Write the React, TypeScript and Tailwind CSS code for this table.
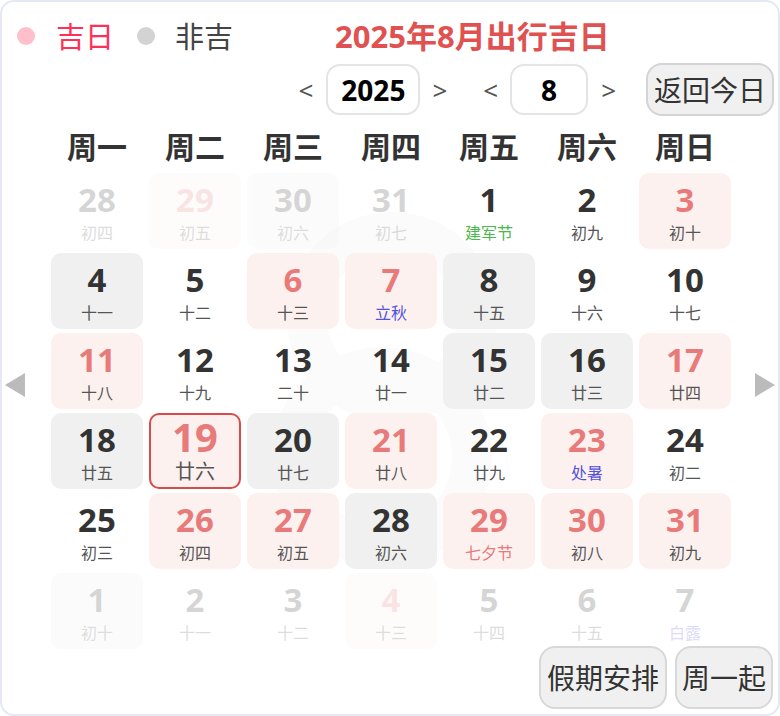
import React from "react";

type Day = {
  d: number;
  l: string;
  kind?: "red" | "grey";
  faded?: boolean;
  lc?: "green" | "blue" | "red";
  today?: boolean;
};

const weekdays = ["周一", "周二", "周三", "周四", "周五", "周六", "周日"];

const days: Day[] = [
  { d: 28, l: "初四", faded: true },
  { d: 29, l: "初五", kind: "red", faded: true },
  { d: 30, l: "初六", kind: "grey", faded: true },
  { d: 31, l: "初七", faded: true },
  { d: 1, l: "建军节", lc: "green" },
  { d: 2, l: "初九" },
  { d: 3, l: "初十", kind: "red" },
  { d: 4, l: "十一", kind: "grey" },
  { d: 5, l: "十二" },
  { d: 6, l: "十三", kind: "red" },
  { d: 7, l: "立秋", kind: "red", lc: "blue" },
  { d: 8, l: "十五", kind: "grey" },
  { d: 9, l: "十六" },
  { d: 10, l: "十七" },
  { d: 11, l: "十八", kind: "red" },
  { d: 12, l: "十九" },
  { d: 13, l: "二十" },
  { d: 14, l: "廿一" },
  { d: 15, l: "廿二", kind: "grey" },
  { d: 16, l: "廿三", kind: "grey" },
  { d: 17, l: "廿四", kind: "red" },
  { d: 18, l: "廿五", kind: "grey" },
  { d: 19, l: "廿六", kind: "red", today: true },
  { d: 20, l: "廿七", kind: "grey" },
  { d: 21, l: "廿八", kind: "red" },
  { d: 22, l: "廿九" },
  { d: 23, l: "处暑", kind: "red", lc: "blue" },
  { d: 24, l: "初二" },
  { d: 25, l: "初三" },
  { d: 26, l: "初四", kind: "red" },
  { d: 27, l: "初五", kind: "red" },
  { d: 28, l: "初六", kind: "grey" },
  { d: 29, l: "七夕节", kind: "red", lc: "red" },
  { d: 30, l: "初八", kind: "red" },
  { d: 31, l: "初九", kind: "red" },
  { d: 1, l: "初十", kind: "grey", faded: true },
  { d: 2, l: "十一", faded: true },
  { d: 3, l: "十二", faded: true },
  { d: 4, l: "十三", kind: "red", faded: true },
  { d: 5, l: "十四", faded: true },
  { d: 6, l: "十五", faded: true },
  { d: 7, l: "白露", lc: "blue", faded: true },
];

function Cell({ day }: { day: Day }) {
  const bg =
    day.kind === "red" ? "bg-[#fdf1f0]" : day.kind === "grey" ? "bg-[#f0f0f0]" : "";
  const num = day.kind === "red" ? "text-[#e87a7a]" : "text-[#333]";
  const lunar =
    day.lc === "green"
      ? "text-[#4cb84c]"
      : day.lc === "blue"
      ? "text-[#5252dc]"
      : day.lc === "red"
      ? "text-[#e87a7a]"
      : "text-[#555]";

  return (
    <div
      className={`relative flex h-[76px] flex-col items-center rounded-[10px] ${bg} ${
        day.faded ? "opacity-20" : ""
      } ${day.today ? "border-2 border-[#d94a4a] rounded-[8px]" : ""}`}
    >
      <span
        className={`font-bold ${num} ${
          day.today ? "mt-[5px] text-[40px] leading-[34px]" : "mt-[10px] text-[33px] leading-none"
        }`}
      >
        {day.d}
      </span>
      <span
        className={`leading-none ${lunar} ${day.today ? "mt-[8px] text-[20px]" : "mt-[9px] text-[16px]"}`}
      >
        {day.l}
      </span>
    </div>
  );
}

function Arrow({ dir }: { dir: "left" | "right" }) {
  return (
    <svg width="20" height="24" viewBox="0 0 20 24" className="shrink-0">
      {dir === "left" ? (
        <polygon points="20,0 20,24 0,12" fill="#bbbbbb" />
      ) : (
        <polygon points="0,0 0,24 20,12" fill="#bbbbbb" />
      )}
    </svg>
  );
}

export default function App() {
  return (
    <div
      className="relative h-[716px] w-[780px] overflow-hidden rounded-[14px] border-2 border-[#e6e9f4] bg-white"
      style={{ fontFamily: '"Noto Sans", "Noto Sans CJK SC", sans-serif' }}
    >
      {/* 背景水印 */}
      <svg
        className="pointer-events-none absolute left-[230px] top-[200px]"
        width="320"
        height="360"
        viewBox="0 0 320 360"
      >
        <circle cx="160" cy="115" r="85" fill="none" stroke="#fbfbfb" strokeWidth="40" />
        <circle cx="150" cy="255" r="90" fill="none" stroke="#fbfbfb" strokeWidth="40" />
      </svg>

      <div className="relative">
        {/* 图例 + 标题 */}
        <div className="mt-[14px] flex h-[40px] items-center pl-[15px]">
          <span className="h-[18px] w-[18px] rounded-full bg-[#ffc0cb]" />
          <span className="ml-[21px] text-[29px] leading-none text-[#ff3057]">吉日</span>
          <span className="ml-[23px] h-[18px] w-[18px] rounded-full bg-[#d3d3d3]" />
          <span className="ml-[20px] text-[29px] leading-none text-[#444]">非吉</span>
          <span className="ml-[102px] text-[31px] font-bold leading-none text-[#e05252]">
            2025年8月出行吉日
          </span>
        </div>

        {/* 年月切换 */}
        <div className="mt-[7px] flex h-[53px] items-center justify-end pr-[4px]">
          <span className="text-[26px] leading-none text-[#555]">&lt;</span>
          <div className="ml-[13px] flex h-[51px] w-[94px] items-center justify-center rounded-[14px] border-2 border-[#e4e4e4] text-[28px] font-bold text-black">
            2025
          </div>
          <span className="ml-[12px] text-[26px] leading-none text-[#555]">&gt;</span>
          <span className="ml-[36px] text-[26px] leading-none text-[#555]">&lt;</span>
          <div className="ml-[12px] flex h-[51px] w-[78px] items-center justify-center rounded-[14px] border-2 border-[#e4e4e4] text-[28px] font-bold text-black">
            8
          </div>
          <span className="ml-[13px] text-[26px] leading-none text-[#555]">&gt;</span>
          <button className="ml-[30px] flex h-[53px] w-[128px] items-center justify-center rounded-[16px] border-2 border-[#d4d4d4] bg-[#f0f0f0] text-[28px] text-[#333]">
            返回今日
          </button>
        </div>

        {/* 日历主体 */}
        <div className="mt-[8px] flex items-start pl-[3px]">
          <div className="mt-[249px]">
            <Arrow dir="left" />
          </div>
          <div className="ml-[26px] w-[680px]">
            <div className="grid h-[36px] grid-cols-7 gap-x-[6px]">
              {weekdays.map((w) => (
                <div key={w} className="flex items-center justify-center text-[30px] font-bold text-[#333]">
                  {w}
                </div>
              ))}
            </div>
            <div className="mt-[13px] grid grid-cols-7 gap-x-[6px] gap-y-[4px]">
              {days.map((day, i) => (
                <Cell key={i} day={day} />
              ))}
            </div>
          </div>
          <div className="ml-[24px] mt-[249px]">
            <Arrow dir="right" />
          </div>
        </div>

        {/* 底部按钮 */}
        <div className="mt-[-3px] flex justify-end gap-[8px] pr-[5px]">
          <button className="flex h-[63px] w-[128px] items-center justify-center rounded-[16px] border-2 border-[#d8d8d8] bg-[#f0f0f0] text-[28px] text-[#333]">
            假期安排
          </button>
          <button className="flex h-[63px] w-[98px] items-center justify-center rounded-[16px] border-2 border-[#d8d8d8] bg-[#f0f0f0] text-[28px] text-[#333]">
            周一起
          </button>
        </div>
      </div>
    </div>
  );
}
